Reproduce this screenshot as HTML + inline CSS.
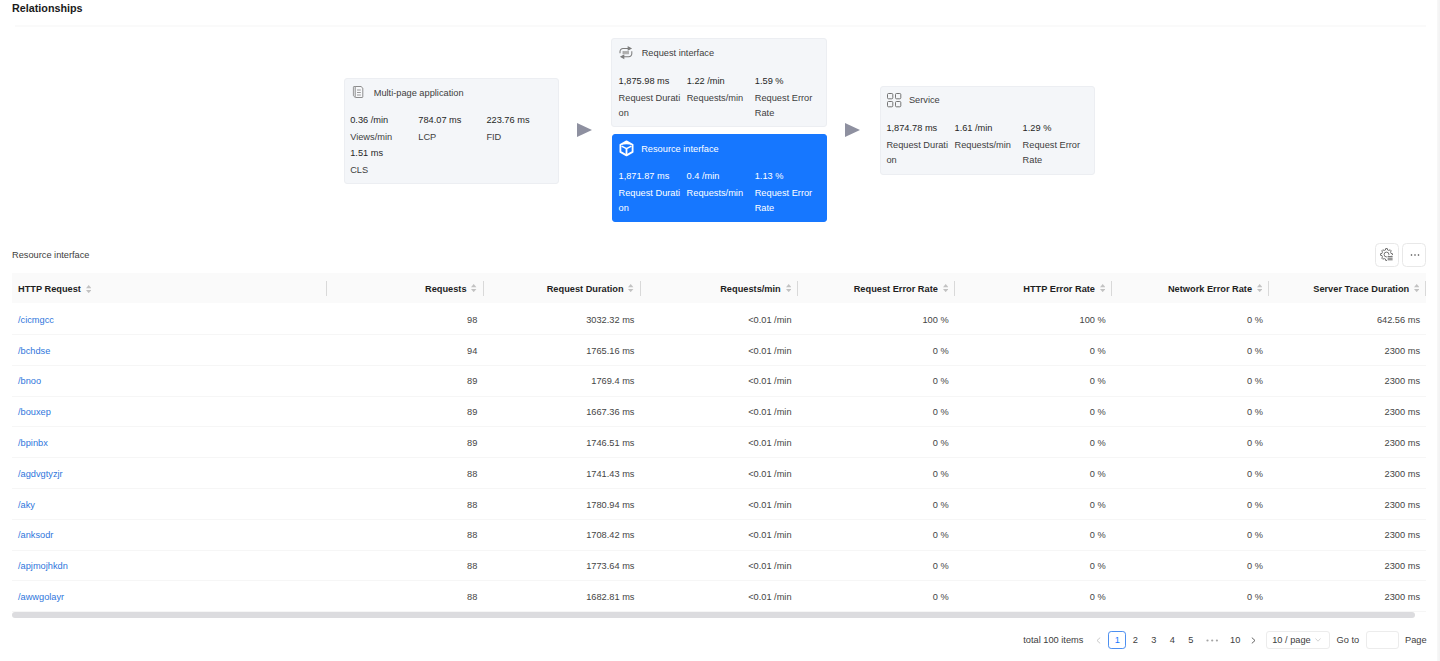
<!DOCTYPE html><html><head><meta charset="utf-8"><style>
*{margin:0;padding:0;box-sizing:border-box}
html,body{width:1440px;height:661px;overflow:hidden;background:#fff}
body{font-family:"Liberation Sans",sans-serif;font-size:9.24px;color:#454545;position:relative}
.a{position:absolute;white-space:nowrap;line-height:1}
.title{left:12px;top:3.0px;font-size:10.78px;font-weight:bold;color:#1a1a1a}
.hline{position:absolute;left:15px;top:24.5px;width:1411px;height:2px;background:#fafafa}
.rstrip{position:absolute;left:1437px;top:0;width:3px;height:661px;background:linear-gradient(90deg,#f8f8f8,#f2f2f2)}
.card{position:absolute;background:#f4f6f9;border:0.77px solid #eceef2;border-radius:3px;color:#404040}
.card.sel{background:#1677ff;border-color:#1677ff;color:#fff}
.card .ct{position:absolute;white-space:nowrap;line-height:1}
.card .ic{position:absolute}
.m{position:absolute;width:64px;line-height:15.4px;word-break:break-all;white-space:normal}
.v{color:#262626}
.sel .v{color:#fff}
.arrow{position:absolute;width:0;height:0;border-top:7.4px solid transparent;border-bottom:7.4px solid transparent;border-left:15.2px solid #8e90a0}
.hdr{position:absolute;left:12px;top:273px;width:1414px;height:30.4px;background:#fafafa}
.hsep{position:absolute;width:1px;height:14.6px;background:#d9d9d9}
.ht{position:absolute;font-weight:bold;color:#1f1f1f;white-space:nowrap;line-height:1}
.sort{position:absolute;width:5.4px;height:8.3px}
.dt{position:absolute;white-space:nowrap;line-height:1}
.lnk{color:#2f76dc}
.rsep{position:absolute;left:12px;width:1414px;height:1px;background:#f6f6f6}
.btn{position:absolute;top:243px;width:24px;height:24px;border:0.8px solid #e8e8e8;border-radius:4.5px;background:#fff}
.sb{position:absolute;left:12px;top:612.2px;width:1402.5px;height:6px;background:#dcdcdf;border-radius:3px}
.pg{position:absolute;white-space:nowrap;line-height:1;color:#404040}
</style></head><body>
<div class="a title">Relationships</div>
<div class="hline"></div>
<div class="rstrip"></div>
<div class="card" style="left:344px;top:78px;width:214.5px;height:105.5px"><div class="ic" style="left:6.3px;top:6.2px"><svg width="14" height="14" viewBox="0 0 14 14" fill="none" stroke="#8c8c8c" stroke-width="1"><path d="M4.2 1.5H10l1.8 1.6V11.9a0.6 0.6 0 0 1-0.6 0.6H4.8a0.6 0.6 0 0 1-0.6-0.6z" fill="#f7f8fa"/><path d="M4.2 1.5H3a0.6 0.6 0 0 0-0.6 0.6V10.8l1.8 1.7" stroke-width="0.9"/><path d="M6 5h3.8M6 7.5h3.8M6 10h3.8" stroke-width="0.9"/></svg></div><div class="ct" style="left:28.7px;top:9.9px">Multi-page application</div><div class="m" style="left:5.2px;top:34.4px"><div class="v">0.36 /min</div><div style="margin-top:1.5px">Views/min</div></div><div class="m" style="left:73.3px;top:34.4px"><div class="v">784.07 ms</div><div style="margin-top:1.5px">LCP</div></div><div class="m" style="left:141.39999999999998px;top:34.4px"><div class="v">223.76 ms</div><div style="margin-top:1.5px">FID</div></div><div class="m" style="left:5.2px;top:67.2px"><div class="v">1.51 ms</div><div style="margin-top:1.5px">CLS</div></div></div>
<div class="card" style="left:611px;top:38px;width:216px;height:89px"><div class="ic" style="left:6.8px;top:7.3px"><svg width="14" height="14" viewBox="0 0 14 14" fill="none" stroke="#7d7d7d" stroke-width="1.05"><path d="M1 7.2V5.4a3 3 0 0 1 3-3h5.5"/><path d="M9.2 0.9l2.8 1.5-2.8 1.5z" fill="#7d7d7d"/><path d="M12.8 5.2v2.6a3 3 0 0 1-3 3H4.5"/><path d="M4.8 9.3L2 10.8l2.8 1.5z" fill="#7d7d7d"/><rect x="3.6" y="5" width="6.2" height="3.2" fill="#a0a0a0" stroke="none"/><path d="M4.4 5.8h4.6M4.4 7.2h4.6" stroke="#d5d5d5" stroke-width="0.5"/></svg></div><div class="ct" style="left:29.7px;top:9.7px">Request interface</div><div class="m" style="left:6.6px;top:34.6px"><div class="v">1,875.98 ms</div><div style="margin-top:1.5px">Request Duration</div></div><div class="m" style="left:74.69999999999999px;top:34.6px"><div class="v">1.22 /min</div><div style="margin-top:1.5px">Requests/min</div></div><div class="m" style="left:142.79999999999998px;top:34.6px"><div class="v">1.59 %</div><div style="margin-top:1.5px">Request Error Rate</div></div></div>
<div class="card sel" style="left:612px;top:134px;width:215px;height:88px"><div class="ic" style="left:5.6px;top:5.3px"><svg width="15" height="17" viewBox="0 0 15 17" fill="none" stroke="#fff" stroke-width="1.8" stroke-linejoin="round"><path d="M7.5 1.3L13.6 4.7v7.2L7.5 15.4 1.4 11.9V4.7z"/><path d="M1.8 4.7L7.5 1.6 13.2 4.7 7.5 4.2z" fill="#fff" stroke="none"/><path d="M2.6 6.1L7.5 8.6l4.9-2.5" stroke-width="1.6"/><path d="M7.5 8.6V14.6"/></svg></div><div class="ct" style="left:28.2px;top:9.7px">Resource interface</div><div class="m" style="left:5.5px;top:34.0px"><div class="v">1,871.87 ms</div><div style="margin-top:1.5px">Request Duration</div></div><div class="m" style="left:73.6px;top:34.0px"><div class="v">0.4 /min</div><div style="margin-top:1.5px">Requests/min</div></div><div class="m" style="left:141.7px;top:34.0px"><div class="v">1.13 %</div><div style="margin-top:1.5px">Request Error Rate</div></div></div>
<div class="card" style="left:879.5px;top:86px;width:215px;height:89px"><div class="ic" style="left:6.7px;top:6.0px"><svg width="15" height="15" viewBox="0 0 15 15" fill="none" stroke="#6e6e6e" stroke-width="0.95"><rect x="0.5" y="0.5" width="5.3" height="5.3" rx="1"/><rect x="8.5" y="0.5" width="5.3" height="5.3" rx="1"/><rect x="0.5" y="8.5" width="5.3" height="5.3" rx="1"/><rect x="8.5" y="8.5" width="5.3" height="5.3" rx="1"/></svg></div><div class="ct" style="left:28.4px;top:9.3px">Service</div><div class="m" style="left:5.9px;top:34.1px"><div class="v">1,874.78 ms</div><div style="margin-top:1.5px">Request Duration</div></div><div class="m" style="left:74.0px;top:34.1px"><div class="v">1.61 /min</div><div style="margin-top:1.5px">Requests/min</div></div><div class="m" style="left:142.1px;top:34.1px"><div class="v">1.29 %</div><div style="margin-top:1.5px">Request Error Rate</div></div></div>
<div class="arrow" style="left:577px;top:123.3px"></div>
<div class="arrow" style="left:845px;top:123.3px"></div>
<div class="a" style="left:12px;top:251px;color:#404040">Resource interface</div>
<div class="btn" style="left:1374.6px"><div style="position:absolute;left:4.6px;top:3.7px"><svg width="14" height="14" viewBox="0 0 14 14" fill="none" stroke="#5a5a5a" stroke-width="0.85" stroke-linejoin="round"><path d="M10.75 4.74 L10.97 5.42 L12.44 5.68 L12.44 7.32 L10.97 7.58 L10.75 8.26 L10.42 8.90 L11.28 10.12 L10.12 11.28 L8.90 10.42 L8.26 10.75 L7.58 10.97 L7.32 12.44 L5.68 12.44 L5.42 10.97 L4.74 10.75 L4.10 10.42 L2.88 11.28 L1.72 10.12 L2.58 8.90 L2.25 8.26 L2.03 7.58 L0.56 7.32 L0.56 5.68 L2.03 5.42 L2.25 4.74 L2.58 4.10 L1.72 2.88 L2.88 1.72 L4.10 2.58 L4.74 2.25 L5.42 2.03 L5.68 0.56 L7.32 0.56 L7.58 2.03 L8.26 2.25 L8.90 2.58 L10.12 1.72 L11.28 2.88 L10.42 4.10Z"/><circle cx="6.5" cy="6.5" r="2.4"/><rect x="7" y="7.2" width="7" height="6.8" fill="#fff" stroke="none"/><path d="M7.6 8.6h5M7.6 10.2h5M7.6 11.8h5" stroke-width="0.9"/></svg></div></div>
<div class="btn" style="left:1401.8px"><svg style="position:absolute;left:6.8px;top:8.7px" width="10" height="4" viewBox="0 0 10 4"><circle cx="1.5" cy="2" r="0.8" fill="#444"/><circle cx="5" cy="2" r="0.8" fill="#444"/><circle cx="8.5" cy="2" r="0.8" fill="#444"/></svg></div>
<div class="hdr"></div>
<div class="ht" style="left:18px;top:284.8px">HTTP Request <span style="display:inline-block;vertical-align:-1px;margin-left:2px"><svg width="5.4" height="8.3" viewBox="0 0 6 9"><path d="M3 0L6 3.6H0z" fill="#c2c2c2"/><path d="M3 9L0 5.4h6z" fill="#c2c2c2"/></svg></span></div>
<div class="hsep" style="left:325.722px;top:281.2px"></div>
<div class="ht" style="right:973.4670000000001px;top:284.8px">Requests</div>
<div class="sort" style="left:471.33299999999997px;top:284.0px"><svg width="5.4" height="8.3" viewBox="0 0 6 9"><path d="M3 0L6 3.6H0z" fill="#c2c2c2"/><path d="M3 9L0 5.4h6z" fill="#c2c2c2"/></svg></div>
<div class="hsep" style="left:482.83299999999997px;top:281.2px"></div>
<div class="ht" style="right:816.356px;top:284.8px">Request Duration</div>
<div class="sort" style="left:628.444px;top:284.0px"><svg width="5.4" height="8.3" viewBox="0 0 6 9"><path d="M3 0L6 3.6H0z" fill="#c2c2c2"/><path d="M3 9L0 5.4h6z" fill="#c2c2c2"/></svg></div>
<div class="hsep" style="left:639.944px;top:281.2px"></div>
<div class="ht" style="right:659.245px;top:284.8px">Requests/min</div>
<div class="sort" style="left:785.555px;top:284.0px"><svg width="5.4" height="8.3" viewBox="0 0 6 9"><path d="M3 0L6 3.6H0z" fill="#c2c2c2"/><path d="M3 9L0 5.4h6z" fill="#c2c2c2"/></svg></div>
<div class="hsep" style="left:797.055px;top:281.2px"></div>
<div class="ht" style="right:502.134px;top:284.8px">Request Error Rate</div>
<div class="sort" style="left:942.6659999999999px;top:284.0px"><svg width="5.4" height="8.3" viewBox="0 0 6 9"><path d="M3 0L6 3.6H0z" fill="#c2c2c2"/><path d="M3 9L0 5.4h6z" fill="#c2c2c2"/></svg></div>
<div class="hsep" style="left:954.1659999999999px;top:281.2px"></div>
<div class="ht" style="right:345.0229999999999px;top:284.8px">HTTP Error Rate</div>
<div class="sort" style="left:1099.777px;top:284.0px"><svg width="5.4" height="8.3" viewBox="0 0 6 9"><path d="M3 0L6 3.6H0z" fill="#c2c2c2"/><path d="M3 9L0 5.4h6z" fill="#c2c2c2"/></svg></div>
<div class="hsep" style="left:1111.277px;top:281.2px"></div>
<div class="ht" style="right:187.91200000000003px;top:284.8px">Network Error Rate</div>
<div class="sort" style="left:1256.888px;top:284.0px"><svg width="5.4" height="8.3" viewBox="0 0 6 9"><path d="M3 0L6 3.6H0z" fill="#c2c2c2"/><path d="M3 9L0 5.4h6z" fill="#c2c2c2"/></svg></div>
<div class="hsep" style="left:1268.388px;top:281.2px"></div>
<div class="ht" style="right:30.80100000000016px;top:284.8px">Server Trace Duration</div>
<div class="sort" style="left:1413.9989999999998px;top:284.0px"><svg width="5.4" height="8.3" viewBox="0 0 6 9"><path d="M3 0L6 3.6H0z" fill="#c2c2c2"/><path d="M3 9L0 5.4h6z" fill="#c2c2c2"/></svg></div>
<div class="hsep" style="left:1425px;top:281.2px"></div>
<div class="rsep" style="top:333.90px"></div>
<div class="dt lnk" style="left:18px;top:315.70px">/cicmgcc</div>
<div class="dt" style="right:962.67px;top:315.70px">98</div>
<div class="dt" style="right:805.56px;top:315.70px">3032.32 ms</div>
<div class="dt" style="right:648.45px;top:315.70px">&lt;0.01 /min</div>
<div class="dt" style="right:491.33px;top:315.70px">100 %</div>
<div class="dt" style="right:334.22px;top:315.70px">100 %</div>
<div class="dt" style="right:177.11px;top:315.70px">0 %</div>
<div class="dt" style="right:20.00px;top:315.70px">642.56 ms</div>
<div class="rsep" style="top:364.70px"></div>
<div class="dt lnk" style="left:18px;top:346.50px">/bchdse</div>
<div class="dt" style="right:962.67px;top:346.50px">94</div>
<div class="dt" style="right:805.56px;top:346.50px">1765.16 ms</div>
<div class="dt" style="right:648.45px;top:346.50px">&lt;0.01 /min</div>
<div class="dt" style="right:491.33px;top:346.50px">0 %</div>
<div class="dt" style="right:334.22px;top:346.50px">0 %</div>
<div class="dt" style="right:177.11px;top:346.50px">0 %</div>
<div class="dt" style="right:20.00px;top:346.50px">2300 ms</div>
<div class="rsep" style="top:395.50px"></div>
<div class="dt lnk" style="left:18px;top:377.30px">/bnoo</div>
<div class="dt" style="right:962.67px;top:377.30px">89</div>
<div class="dt" style="right:805.56px;top:377.30px">1769.4 ms</div>
<div class="dt" style="right:648.45px;top:377.30px">&lt;0.01 /min</div>
<div class="dt" style="right:491.33px;top:377.30px">0 %</div>
<div class="dt" style="right:334.22px;top:377.30px">0 %</div>
<div class="dt" style="right:177.11px;top:377.30px">0 %</div>
<div class="dt" style="right:20.00px;top:377.30px">2300 ms</div>
<div class="rsep" style="top:426.30px"></div>
<div class="dt lnk" style="left:18px;top:408.10px">/bouxep</div>
<div class="dt" style="right:962.67px;top:408.10px">89</div>
<div class="dt" style="right:805.56px;top:408.10px">1667.36 ms</div>
<div class="dt" style="right:648.45px;top:408.10px">&lt;0.01 /min</div>
<div class="dt" style="right:491.33px;top:408.10px">0 %</div>
<div class="dt" style="right:334.22px;top:408.10px">0 %</div>
<div class="dt" style="right:177.11px;top:408.10px">0 %</div>
<div class="dt" style="right:20.00px;top:408.10px">2300 ms</div>
<div class="rsep" style="top:457.10px"></div>
<div class="dt lnk" style="left:18px;top:438.90px">/bpinbx</div>
<div class="dt" style="right:962.67px;top:438.90px">89</div>
<div class="dt" style="right:805.56px;top:438.90px">1746.51 ms</div>
<div class="dt" style="right:648.45px;top:438.90px">&lt;0.01 /min</div>
<div class="dt" style="right:491.33px;top:438.90px">0 %</div>
<div class="dt" style="right:334.22px;top:438.90px">0 %</div>
<div class="dt" style="right:177.11px;top:438.90px">0 %</div>
<div class="dt" style="right:20.00px;top:438.90px">2300 ms</div>
<div class="rsep" style="top:487.90px"></div>
<div class="dt lnk" style="left:18px;top:469.70px">/agdvgtyzjr</div>
<div class="dt" style="right:962.67px;top:469.70px">88</div>
<div class="dt" style="right:805.56px;top:469.70px">1741.43 ms</div>
<div class="dt" style="right:648.45px;top:469.70px">&lt;0.01 /min</div>
<div class="dt" style="right:491.33px;top:469.70px">0 %</div>
<div class="dt" style="right:334.22px;top:469.70px">0 %</div>
<div class="dt" style="right:177.11px;top:469.70px">0 %</div>
<div class="dt" style="right:20.00px;top:469.70px">2300 ms</div>
<div class="rsep" style="top:518.70px"></div>
<div class="dt lnk" style="left:18px;top:500.50px">/aky</div>
<div class="dt" style="right:962.67px;top:500.50px">88</div>
<div class="dt" style="right:805.56px;top:500.50px">1780.94 ms</div>
<div class="dt" style="right:648.45px;top:500.50px">&lt;0.01 /min</div>
<div class="dt" style="right:491.33px;top:500.50px">0 %</div>
<div class="dt" style="right:334.22px;top:500.50px">0 %</div>
<div class="dt" style="right:177.11px;top:500.50px">0 %</div>
<div class="dt" style="right:20.00px;top:500.50px">2300 ms</div>
<div class="rsep" style="top:549.50px"></div>
<div class="dt lnk" style="left:18px;top:531.30px">/anksodr</div>
<div class="dt" style="right:962.67px;top:531.30px">88</div>
<div class="dt" style="right:805.56px;top:531.30px">1708.42 ms</div>
<div class="dt" style="right:648.45px;top:531.30px">&lt;0.01 /min</div>
<div class="dt" style="right:491.33px;top:531.30px">0 %</div>
<div class="dt" style="right:334.22px;top:531.30px">0 %</div>
<div class="dt" style="right:177.11px;top:531.30px">0 %</div>
<div class="dt" style="right:20.00px;top:531.30px">2300 ms</div>
<div class="rsep" style="top:580.30px"></div>
<div class="dt lnk" style="left:18px;top:562.10px">/apjmojhkdn</div>
<div class="dt" style="right:962.67px;top:562.10px">88</div>
<div class="dt" style="right:805.56px;top:562.10px">1773.64 ms</div>
<div class="dt" style="right:648.45px;top:562.10px">&lt;0.01 /min</div>
<div class="dt" style="right:491.33px;top:562.10px">0 %</div>
<div class="dt" style="right:334.22px;top:562.10px">0 %</div>
<div class="dt" style="right:177.11px;top:562.10px">0 %</div>
<div class="dt" style="right:20.00px;top:562.10px">2300 ms</div>
<div class="rsep" style="top:611.10px"></div>
<div class="dt lnk" style="left:18px;top:592.90px">/awwgolayr</div>
<div class="dt" style="right:962.67px;top:592.90px">88</div>
<div class="dt" style="right:805.56px;top:592.90px">1682.81 ms</div>
<div class="dt" style="right:648.45px;top:592.90px">&lt;0.01 /min</div>
<div class="dt" style="right:491.33px;top:592.90px">0 %</div>
<div class="dt" style="right:334.22px;top:592.90px">0 %</div>
<div class="dt" style="right:177.11px;top:592.90px">0 %</div>
<div class="dt" style="right:20.00px;top:592.90px">2300 ms</div>
<div class="sb"></div>
<div class="pg" style="left:1023.3px;top:636.0px">total 100 items</div>
<svg style="position:absolute;left:1095.8px;top:636.6px" width="5" height="7" viewBox="0 0 5 7"><path d="M4.2 0.6L1 3.5 4.2 6.4" fill="none" stroke="#c4c4c4" stroke-width="0.9"/></svg>
<div style="position:absolute;left:1108.2px;top:630.6px;width:18.2px;height:18.3px;border:0.85px solid #4d8ff0;border-radius:3.2px"></div>
<div class="pg" style="left:1117.3px;top:636.0px;width:20px;margin-left:-10px;text-align:center;color:#1677ff">1</div>
<div class="pg" style="left:1135.4px;top:636.0px;width:20px;margin-left:-10px;text-align:center;color:#404040">2</div>
<div class="pg" style="left:1153.9px;top:636.0px;width:20px;margin-left:-10px;text-align:center;color:#404040">3</div>
<div class="pg" style="left:1172.4px;top:636.0px;width:20px;margin-left:-10px;text-align:center;color:#404040">4</div>
<div class="pg" style="left:1190.9px;top:636.0px;width:20px;margin-left:-10px;text-align:center;color:#404040">5</div>
<div class="pg" style="left:1235.2px;top:636.0px;width:20px;margin-left:-10px;text-align:center;color:#404040">10</div>
<svg style="position:absolute;left:1206px;top:638.6px" width="13" height="3" viewBox="0 0 13 3"><circle cx="1.5" cy="1.5" r="1.1" fill="#a4a4a4"/><circle cx="6.2" cy="1.5" r="1.1" fill="#a4a4a4"/><circle cx="10.9" cy="1.5" r="1.1" fill="#a4a4a4"/></svg>
<svg style="position:absolute;left:1251.3px;top:636.6px" width="5" height="7" viewBox="0 0 5 7"><path d="M0.8 0.6L4 3.5 0.8 6.4" fill="none" stroke="#555" stroke-width="0.9"/></svg>
<div style="position:absolute;left:1266px;top:630.8px;width:63.6px;height:18.2px;border:0.8px solid #ececec;border-radius:3px"></div>
<div class="pg" style="left:1272.2px;top:636.0px">10 / page</div>
<svg style="position:absolute;left:1314.8px;top:637.5px" width="6" height="4" viewBox="0 0 6 4"><path d="M0.5 0.5L3 3.2 5.5 0.5" fill="none" stroke="#c8c8c8" stroke-width="0.8"/></svg>
<div class="pg" style="left:1336.5px;top:636.0px">Go to</div>
<div style="position:absolute;left:1365.5px;top:630.8px;width:33.6px;height:18.2px;border:0.8px solid #ececec;border-radius:3px"></div>
<div class="pg" style="left:1405px;top:636.0px">Page</div>
</body></html>
